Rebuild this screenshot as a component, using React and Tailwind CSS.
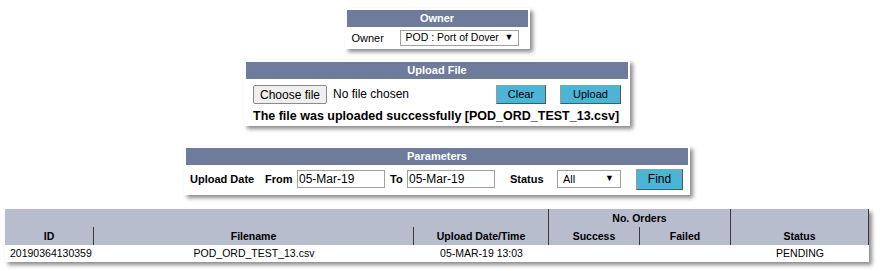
import React from "react";

const Panel = ({ title, className, children }) => {
  return (
    <div
      className={`bg-white p-[2px] shadow-[3px_3px_4px_rgba(0,0,0,0.45)] ${className}`}
    >
      <div className="h-[17px] bg-[#6e7b9b] text-center text-[11px] font-bold leading-[17px] text-white">
        {title}
      </div>
      {children}
    </div>
  );
};

const CyanButton = ({ label, className }) => (
  <button
    className={`bg-[#4cb4d5] border border-[#9a9a9a] border-b-[#555] border-r-[#555] text-[11px] text-black ${className}`}
  >
    {label}
  </button>
);

const FakeSelect = ({ value, className }) => (
  <div
    className={`flex items-center justify-between border border-[#a0a0a0] bg-white pl-[5px] pr-[4px] ${className}`}
  >
    <span>{value}</span>
    <span className="text-[9px]">▼</span>
  </div>
);

const App = () => {
  return (
    <div className="min-h-screen bg-white font-['Liberation_Sans',Arial,sans-serif] text-black">
      <div className="flex w-[874px] flex-col items-center">
        {/* owner */}
        <Panel title="Owner" className="mt-[8px] w-[185px]">
          <div className="flex h-[20px] items-center pl-[5px] pt-[2px] text-[11px]">
            <span className="w-[48px]">Owner</span>
            <FakeSelect value="POD : Port of Dover" className="h-[16px] w-[119px] text-[10.5px]" />
          </div>
        </Panel>

        {/* upload */}
        <Panel title="Upload File" className="mt-[11px] w-[386px]">
          <div className="px-[7px] pt-[5px]">
            <div className="flex h-[20px] items-center">
              <button className="h-[19px] w-[74px] rounded-[2px] border border-[#8a8a8a] bg-[#efefef] text-[12px]">
                Choose file
              </button>
              <span className="ml-[6px] text-[12px]">No file chosen</span>
              <CyanButton label="Clear" className="ml-auto h-[19px] w-[50px]" />
              <CyanButton label="Upload" className="ml-[14px] h-[19px] w-[61px]" />
            </div>
            <div className="mt-[5px] h-[15px] text-[12.5px] font-bold leading-[15px]">
              The file was uploaded successfully [POD_ORD_TEST_13.csv]
            </div>
          </div>
        </Panel>

        {/* parameters */}
        <Panel title="Parameters" className="mt-[20px] w-[506px]">
          <div className="flex h-[28px] items-center pl-[4px] text-[11px] font-bold">
            <span className="w-[75px]">Upload Date</span>
            <span className="w-[32px]">From</span>
            <div className="flex h-[18px] w-[88px] items-center border border-[#a0a0a0] pl-[1px] text-[12px] font-normal">
              05-Mar-19
            </div>
            <span className="w-[22px] pl-[5px]">To</span>
            <div className="flex h-[18px] w-[88px] items-center border border-[#a0a0a0] pl-[1px] text-[12px] font-normal">
              05-Mar-19
            </div>
            <span className="w-[62px] pl-[15px]">Status</span>
            <FakeSelect value="All" className="h-[18px] w-[64px] pl-[3px] pr-[6px] text-[11px] font-normal" />
            <CyanButton label="Find" className="ml-[15px] h-[21px] w-[47px] text-[12px] font-normal" />
          </div>
        </Panel>

        {/* results */}
        <div className="mt-[14px] w-[864px] bg-white text-[10.5px] shadow-[3px_3px_4px_rgba(0,0,0,0.45)]">
          <div className="grid grid-cols-[89px_320px_135px_91px_91px_138px] bg-[#b7bdcd] font-bold">
            <div className="col-span-3 h-[18px] border-r border-[#3a3a3a]"></div>
            <div className="col-span-2 h-[18px] border-r border-[#3a3a3a] text-center leading-[18px]">
              No. Orders
            </div>
            <div className="h-[18px] border-r border-[#3a3a3a]"></div>
            <div className="h-[18px] border-r border-[#3a3a3a] text-center leading-[18px]">ID</div>
            <div className="h-[18px] border-r border-[#3a3a3a] text-center leading-[18px]">Filename</div>
            <div className="h-[18px] border-r border-[#3a3a3a] text-center leading-[18px]">Upload Date/Time</div>
            <div className="h-[18px] border-r border-[#3a3a3a] text-center leading-[18px]">Success</div>
            <div className="h-[18px] border-r border-[#3a3a3a] text-center leading-[18px]">Failed</div>
            <div className="h-[18px] border-r border-[#3a3a3a] text-center leading-[18px]">Status</div>
          </div>
          <div className="grid h-[17px] grid-cols-[89px_320px_135px_91px_91px_138px] leading-[17px]">
            <div className="pl-[5px]">20190364130359</div>
            <div className="text-center">POD_ORD_TEST_13.csv</div>
            <div className="text-center">05-MAR-19 13:03</div>
            <div></div>
            <div></div>
            <div className="text-center">PENDING</div>
          </div>
        </div>
      </div>
    </div>
  );
};

export default App;
